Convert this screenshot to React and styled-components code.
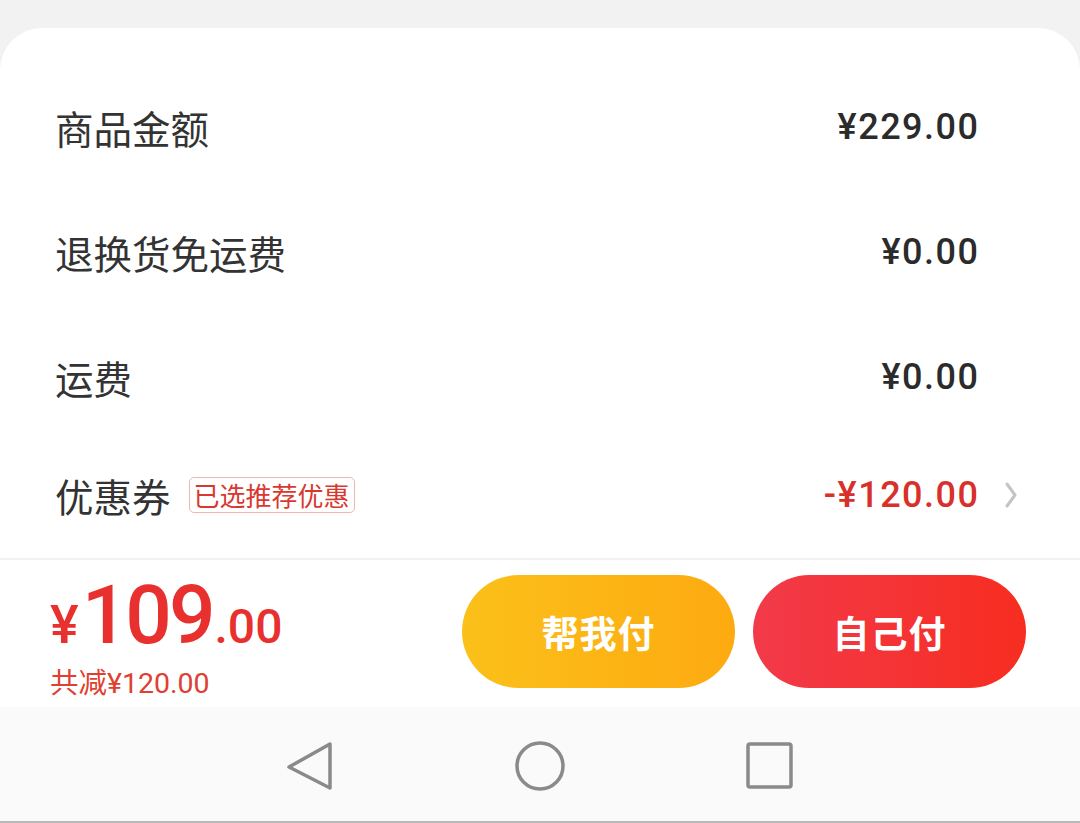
import React from "react";
import styled, { createGlobalStyle } from "styled-components";

const GlobalStyle = createGlobalStyle`
  html, body {
    margin: 0;
    padding: 0;
    background: #f2f2f2;
  }
  body {
    font-family: Roboto, "Noto Sans CJK SC", sans-serif;
  }
`;

const Screen = styled.div`
  width: 1080px;
  height: 823px;
  display: flex;
  flex-direction: column;
  background: #f2f2f2;
  overflow: hidden;
`;

const Sheet = styled.div`
  margin-top: 28px;
  background: #fff;
  border-radius: 42px 42px 0 0;
  display: flex;
  flex-direction: column;
  flex: 1;
`;

const List = styled.div`
  display: flex;
  flex-direction: column;
  padding: 36px 0 7px;
  border-bottom: 2px solid #f2f2f2;
`;

const Row = styled.div`
  height: ${(p) => p.h || 125}px;
  display: flex;
  align-items: center;
  padding: 0 102px 0 55px;
  position: relative;
`;

const Label = styled.span`
  font-family: "Noto Sans CJK SC", sans-serif;
  font-size: 38.5px;
  color: #333;
`;

const Tag = styled.span`
  margin-left: 18px;
  height: 34px;
  padding: 0 4px;
  display: inline-flex;
  align-items: center;
  border: 1.5px solid #f2b5b0;
  border-radius: 5px;
  font-family: "Noto Sans CJK SC", sans-serif;
  font-size: 26px;
  color: #d9382f;
  line-height: 1;
`;

const Value = styled.span`
  margin-left: auto;
  font-family: Roboto, "Noto Sans CJK SC", sans-serif;
  font-weight: 500;
  font-size: 36px;
  letter-spacing: 1.5px;
  margin-right: -1.5px;
  color: ${(p) => (p.red ? "#d8302a" : "#2b2b2b")};
`;

const Chevron = styled.svg`
  position: absolute;
  right: 62px;
  top: 50%;
  transform: translateY(-50%);
`;

const Bar = styled.div`
  height: 147px;
  display: flex;
  align-items: center;
  padding: 0 54px 0 50px;
`;

const PriceBlock = styled.div`
  display: flex;
  flex-direction: column;
  color: #e8302f;
  margin-top: 6px;
`;

const Price = styled.div`
  display: flex;
  align-items: baseline;
  font-family: Roboto, sans-serif;
  font-weight: 500;
  line-height: 1;
`;

const Yen = styled.span`
  font-size: 54px;
  margin-right: 3px;
`;

const Big = styled.span`
  font-size: 82px;
  letter-spacing: -3px;
`;

const Cents = styled.span`
  font-size: 48px;
  margin-left: 2px;
`;

const Saved = styled.div`
  margin-top: 14px;
  font-family: Roboto, "Noto Sans CJK SC", sans-serif;
  font-size: 28.5px;
  line-height: 1;
  color: #e0402f;
`;

const Buttons = styled.div`
  margin-left: auto;
  display: flex;
  gap: 18px;
  margin-top: -4px;
`;

const PayButton = styled.button`
  width: 273px;
  height: 113px;
  border: none;
  border-radius: 57px;
  background: ${(p) =>
    p.variant === "help"
      ? "linear-gradient(90deg, #fbc01a, #fdaa10)"
      : "linear-gradient(90deg, #f23a4a, #f72d20)"};
  color: #fff;
  font-family: "Noto Sans CJK SC", sans-serif;
  font-weight: 700;
  font-size: 37px;
  letter-spacing: 1px;
`;

const NavBar = styled.div`
  flex: 1;
  background: #fafafa;
  border-bottom: 2px solid #b8b8b8;
  display: flex;
  align-items: center;
  justify-content: center;
  gap: 180px;
`;

const NavIcon = styled.svg`
  width: 50px;
  height: 50px;
  margin-top: 4px;
`;

const rows = [
  { label: "商品金额", value: "¥229.00" },
  { label: "退换货免运费", value: "¥0.00" },
  { label: "运费", value: "¥0.00" },
];

export default function App() {
  return (
    <Screen>
      <GlobalStyle />
      <Sheet>
        <List>
          {rows.map((r) => (
            <Row key={r.label}>
              <Label>{r.label}</Label>
              <Value>{r.value}</Value>
            </Row>
          ))}
          <Row h={112}>
            <Label>优惠券</Label>
            <Tag>已选推荐优惠</Tag>
            <Value red>-¥120.00</Value>
            <Chevron width="14" height="28" viewBox="0 0 14 28">
              <path d="M3 3 L11 14 L3 25" fill="none" stroke="#c4c4c4" strokeWidth="3" strokeLinecap="round" strokeLinejoin="round" />
            </Chevron>
          </Row>
        </List>
        <Bar>
          <PriceBlock>
            <Price>
              <Yen>¥</Yen>
              <Big>109</Big>
              <Cents>.00</Cents>
            </Price>
            <Saved>共减¥120.00</Saved>
          </PriceBlock>
          <Buttons>
            <PayButton variant="help">帮我付</PayButton>
            <PayButton variant="self">自己付</PayButton>
          </Buttons>
        </Bar>
        <NavBar>
          <NavIcon viewBox="0 0 50 50">
            <path d="M45 3 L45 47 L4 26 Z" fill="none" stroke="#8a8a8a" strokeWidth="3.5" strokeLinejoin="round" />
          </NavIcon>
          <NavIcon viewBox="0 0 50 50">
            <circle cx="25" cy="25" r="23" fill="none" stroke="#8a8a8a" strokeWidth="3.5" />
          </NavIcon>
          <NavIcon viewBox="0 0 50 50">
            <rect x="3" y="3" width="43" height="43" rx="2" fill="none" stroke="#8a8a8a" strokeWidth="3.5" />
          </NavIcon>
        </NavBar>
      </Sheet>
    </Screen>
  );
}
